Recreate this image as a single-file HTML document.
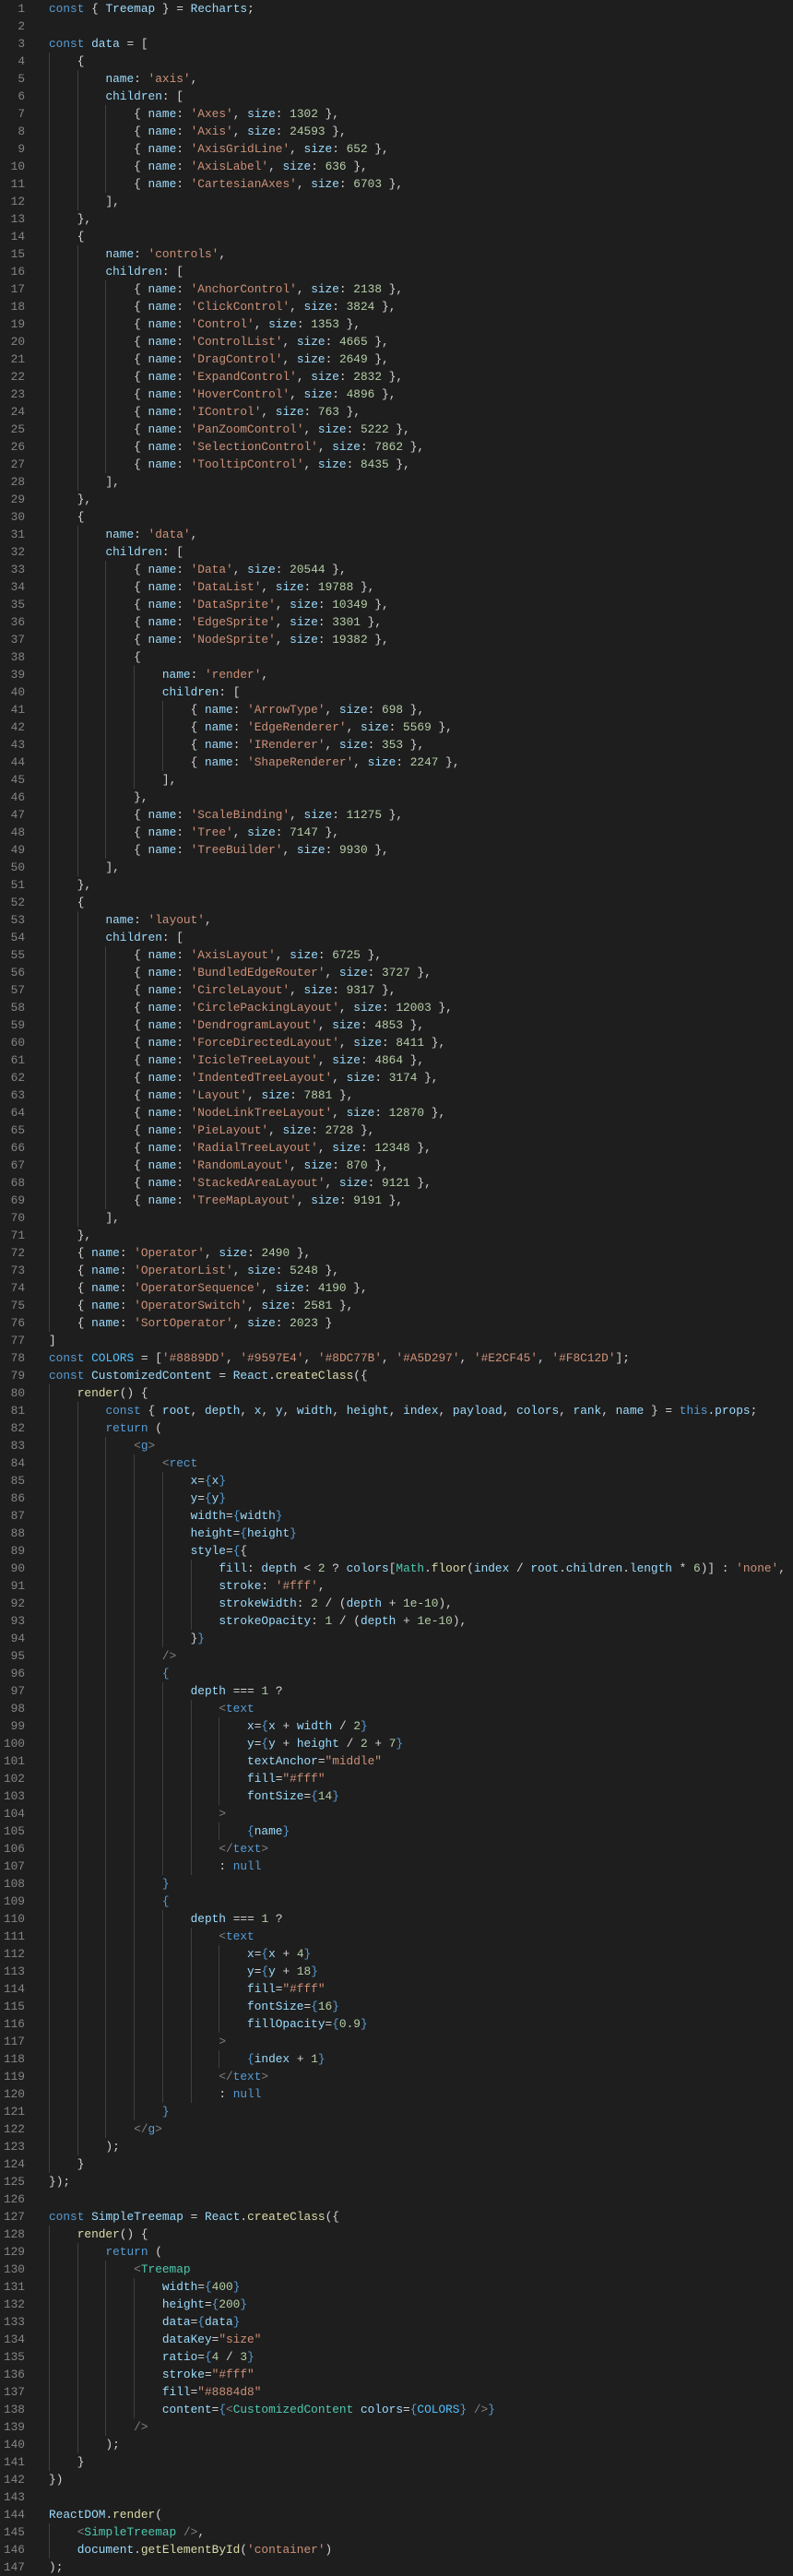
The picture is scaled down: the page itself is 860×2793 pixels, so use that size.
<!DOCTYPE html>
<html><head><meta charset="utf-8">
<style>
html,body{margin:0;padding:0;background:#1e1e1e;width:860px;height:2793px;overflow:hidden}
#ed{position:relative;font-family:"Liberation Mono","DejaVu Sans Mono",monospace;font-size:12.8px;line-height:19px;color:#d4d4d4}
.l{position:relative;height:19px;white-space:pre}
.n{position:absolute;left:0;width:27px;text-align:right;color:#858585}
.c{position:absolute;left:53px;top:0}
.g{position:absolute;top:0;width:1px;height:19px;background:#404040}
#src{display:none}
</style></head><body>
<div id="ed"></div>
<pre id="src">const { Treemap } = Recharts;

const data = [
    {
        name: 'axis',
        children: [
            { name: 'Axes', size: 1302 },
            { name: 'Axis', size: 24593 },
            { name: 'AxisGridLine', size: 652 },
            { name: 'AxisLabel', size: 636 },
            { name: 'CartesianAxes', size: 6703 },
        ],
    },
    {
        name: 'controls',
        children: [
            { name: 'AnchorControl', size: 2138 },
            { name: 'ClickControl', size: 3824 },
            { name: 'Control', size: 1353 },
            { name: 'ControlList', size: 4665 },
            { name: 'DragControl', size: 2649 },
            { name: 'ExpandControl', size: 2832 },
            { name: 'HoverControl', size: 4896 },
            { name: 'IControl', size: 763 },
            { name: 'PanZoomControl', size: 5222 },
            { name: 'SelectionControl', size: 7862 },
            { name: 'TooltipControl', size: 8435 },
        ],
    },
    {
        name: 'data',
        children: [
            { name: 'Data', size: 20544 },
            { name: 'DataList', size: 19788 },
            { name: 'DataSprite', size: 10349 },
            { name: 'EdgeSprite', size: 3301 },
            { name: 'NodeSprite', size: 19382 },
            {
                name: 'render',
                children: [
                    { name: 'ArrowType', size: 698 },
                    { name: 'EdgeRenderer', size: 5569 },
                    { name: 'IRenderer', size: 353 },
                    { name: 'ShapeRenderer', size: 2247 },
                ],
            },
            { name: 'ScaleBinding', size: 11275 },
            { name: 'Tree', size: 7147 },
            { name: 'TreeBuilder', size: 9930 },
        ],
    },
    {
        name: 'layout',
        children: [
            { name: 'AxisLayout', size: 6725 },
            { name: 'BundledEdgeRouter', size: 3727 },
            { name: 'CircleLayout', size: 9317 },
            { name: 'CirclePackingLayout', size: 12003 },
            { name: 'DendrogramLayout', size: 4853 },
            { name: 'ForceDirectedLayout', size: 8411 },
            { name: 'IcicleTreeLayout', size: 4864 },
            { name: 'IndentedTreeLayout', size: 3174 },
            { name: 'Layout', size: 7881 },
            { name: 'NodeLinkTreeLayout', size: 12870 },
            { name: 'PieLayout', size: 2728 },
            { name: 'RadialTreeLayout', size: 12348 },
            { name: 'RandomLayout', size: 870 },
            { name: 'StackedAreaLayout', size: 9121 },
            { name: 'TreeMapLayout', size: 9191 },
        ],
    },
    { name: 'Operator', size: 2490 },
    { name: 'OperatorList', size: 5248 },
    { name: 'OperatorSequence', size: 4190 },
    { name: 'OperatorSwitch', size: 2581 },
    { name: 'SortOperator', size: 2023 }
]
const COLORS = ['#8889DD', '#9597E4', '#8DC77B', '#A5D297', '#E2CF45', '#F8C12D'];
const CustomizedContent = React.createClass({
    render() {
        const { root, depth, x, y, width, height, index, payload, colors, rank, name } = this.props;
        return (
            &lt;g&gt;
                &lt;rect
                    x={x}
                    y={y}
                    width={width}
                    height={height}
                    style={{
                        fill: depth &lt; 2 ? colors[Math.floor(index / root.children.length * 6)] : 'none',
                        stroke: '#fff',
                        strokeWidth: 2 / (depth + 1e-10),
                        strokeOpacity: 1 / (depth + 1e-10),
                    }}
                /&gt;
                {
                    depth === 1 ?
                        &lt;text
                            x={x + width / 2}
                            y={y + height / 2 + 7}
                            textAnchor="middle"
                            fill="#fff"
                            fontSize={14}
                        &gt;
                            {name}
                        &lt;/text&gt;
                        : null
                }
                {
                    depth === 1 ?
                        &lt;text
                            x={x + 4}
                            y={y + 18}
                            fill="#fff"
                            fontSize={16}
                            fillOpacity={0.9}
                        &gt;
                            {index + 1}
                        &lt;/text&gt;
                        : null
                }
            &lt;/g&gt;
        );
    }
});

const SimpleTreemap = React.createClass({
    render() {
        return (
            &lt;Treemap
                width={400}
                height={200}
                data={data}
                dataKey="size"
                ratio={4 / 3}
                stroke="#fff"
                fill="#8884d8"
                content={&lt;CustomizedContent colors={COLORS} /&gt;}
            /&gt;
        );
    }
})

ReactDOM.render(
    &lt;SimpleTreemap /&gt;,
    document.getElementById('container')
);</pre>
<script>
(function(){
var lines=document.getElementById('src').textContent.split('\n');
var ed=document.getElementById('ed');
var CW=7.68;
var KW={'const':1,'return':1,'this':1,'null':1};
var HTMLT={'g':1,'rect':1,'text':1};
function esc(s){return s.replace(/&/g,'&amp;').replace(/</g,'&lt;').replace(/>/g,'&gt;');}
function sp(t,c){return '<span style="color:'+c+'">'+esc(t)+'</span>';}
var stack=[];
lines.forEach(function(line,i){
  var ln=i+1;
  var jsx=(ln>=83&&ln<=122)||(ln>=130&&ln<=139)||ln==145;
  var d=document.createElement('div');d.className='l';
  var ind=line.match(/^ */)[0].length;
  var h='';
  for(var k=0;k<ind;k+=4){h+='<div class="g" style="left:'+Math.round(53+k*CW)+'px"></div>';}
  h+='<span class="n">'+ln+'</span>';
  var re=/('[^']*'|"[^"]*")|(\d+(?:\.\d+)?(?:e-?\d+)?)|([A-Za-z_$][\w$]*)|(\s+)|(.)/g,m,out='',prev='',prevNS='';
  var toks=[];while((m=re.exec(line))){toks.push(m);}
  for(var t=0;t<toks.length;t++){
    m=toks[t];var s=m[0];
    var nxt=t+1<toks.length?toks[t+1][0]:'';
    if(m[1]){out+=sp(s,'#ce9178');}
    else if(m[2]){out+=sp(s,'#b5cea8');}
    else if(m[3]){
      var c='#9cdcfe';
      if(KW[s])c='#569cd6';
      else if(prevNS=='<'||prevNS=='</'){c=HTMLT[s]?'#569cd6':'#4ec9b0';}
      else if(nxt=='(')c='#dcdcaa';
      else if(s=='Math')c='#4ec9b0';
      else if(/^[A-Z][A-Z]+$/.test(s))c='#4fc1ff';
      out+=sp(s,c);
    }
    else if(m[4]){out+=s;}
    else{
      var c2='#d4d4d4';
      if(s=='<'&&(/[A-Za-z\/]/.test(nxt.charAt(0)))){c2='#808080';
        if(nxt=='/'){out+=sp('</','#808080');t++;prevNS='</';continue;}
      }
      else if(s=='>'&&jsx)c2='#808080';
      else if(s=='/'&&nxt=='>'){c2='#808080';}
      else if(s=='{'){
        var blue=jsx&&(prevNS=='='||line.trim().charAt(0)=='{');
        stack.push(blue);if(blue)c2='#569cd6';
      }
      else if(s=='}'){var b=stack.pop();if(b)c2='#569cd6';}
      out+=sp(s,c2);
      prevNS=s;continue;
    }
    if(!m[4])prevNS=s;
  }
  h+='<span class="c">'+out+'</span>';
  d.innerHTML=h;ed.appendChild(d);
});
})();
</script>
</body></html>
